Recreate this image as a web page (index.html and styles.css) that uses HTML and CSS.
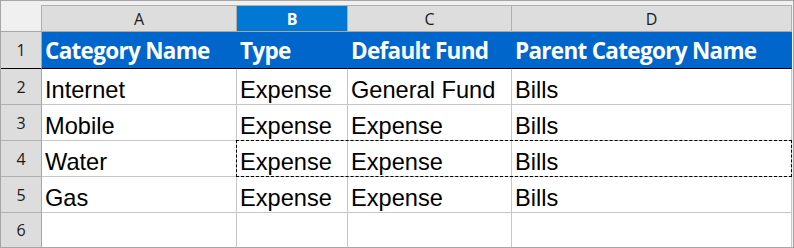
FILE: index.html
```html
<!DOCTYPE html>
<html lang="en">
<head>
    <meta charset="UTF-8">
    <meta name="viewport" content="width=device-width, initial-scale=1.0">
    <title>Categories</title>
    <link rel="stylesheet" href="styles.css">
</head>
<body>
    <div class="sheet">
        <!-- column letters -->
        <div class="corner"></div>
        <div class="colhead first">A</div>
        <div class="colhead active">B</div>
        <div class="colhead">C</div>
        <div class="colhead">D</div>

        <!-- row 1: headings -->
        <div class="rowhead top">1</div>
        <div class="cell heading">Category Name</div>
        <div class="cell heading">Type</div>
        <div class="cell heading">Default Fund</div>
        <div class="cell heading">Parent Category Name</div>

        <div class="rowhead">2</div>
        <div class="cell">Internet</div>
        <div class="cell">Expense</div>
        <div class="cell">General Fund</div>
        <div class="cell">Bills</div>

        <div class="rowhead">3</div>
        <div class="cell">Mobile</div>
        <div class="cell">Expense</div>
        <div class="cell">Expense</div>
        <div class="cell">Bills</div>

        <div class="rowhead">4</div>
        <div class="cell">Water</div>
        <div class="cell">Expense</div>
        <div class="cell">Expense</div>
        <div class="cell">Bills</div>

        <div class="rowhead">5</div>
        <div class="cell">Gas</div>
        <div class="cell">Expense</div>
        <div class="cell">Expense</div>
        <div class="cell">Bills</div>

        <div class="rowhead last">6</div>
        <div class="cell last"></div>
        <div class="cell last"></div>
        <div class="cell last"></div>
        <div class="cell last"></div>

        <!-- copy marquee around B4:D4 -->
        <div class="marquee"></div>
    </div>
</body>
</html>
```

FILE: styles.css
```css
body {
    margin: 0;
    padding: 0;
    background-color: #ffffff;
    font-family: "Liberation Sans", Arial, sans-serif;
}
.sheet {
    position: relative;
    width: 794px;
    height: 248px;
    box-sizing: border-box;
    border: 1px solid #a6a6a6;
    background-color: #f0f0f0;
    display: grid;
    grid-template-columns: 41px 195px 111px 164px 280px;
    grid-template-rows: 31px 37px 36px 36px 36px 36px 34px;
    align-content: start;
}
.corner {
    background-color: #f0f0f0;
    border-bottom: 1px solid #a6a6a6;
}
.colhead {
    margin-top: 4px;
    box-sizing: border-box;
    background-color: #dddddd;
    border-top: 1px solid #b0b0b0;
    border-right: 1px solid #b0b0b0;
    border-bottom: 1px solid #a6a6a6;
    display: flex;
    align-items: center;
    justify-content: center;
    font-family: "Open Sans", "Noto Sans", sans-serif;
    font-size: 16px;
    color: #1a1a1a;
}
.colhead.first {
    margin-left: -1px;
    border-left: 1px solid #b0b0b0;
}
.colhead.active {
    background-color: #0078d4;
    color: #ffffff;
    font-weight: bold;
}
.rowhead {
    box-sizing: border-box;
    background-color: #dddddd;
    border-right: 1px solid #a6a6a6;
    border-bottom: 1px solid #b0b0b0;
    display: flex;
    align-items: center;
    justify-content: center;
    font-family: "Open Sans", "Noto Sans", sans-serif;
    font-size: 16px;
    color: #1a1a1a;
}
.rowhead.top {
    border-bottom-color: #000000;
}
.cell {
    box-sizing: border-box;
    background-color: #ffffff;
    border-right: 1px solid #c6c6c6;
    border-bottom: 1px solid #c6c6c6;
    padding: 0 3px;
    display: flex;
    align-items: flex-end;
    font-size: 23.6px;
    color: #000000;
    white-space: nowrap;
    overflow: hidden;
}
.cell.heading {
    background-color: #0066cc;
    border-right-color: #0066cc;
    border-bottom-color: #000000;
    align-items: center;
    font-family: "Open Sans", "Noto Sans", sans-serif;
    font-weight: bold;
    font-size: 22.5px;
    letter-spacing: -0.7px;
    color: #ffffff;
}
.rowhead.last,
.cell.last {
    border-bottom: none;
}
.marquee {
    position: absolute;
    left: 235px;
    top: 139px;
    width: 556px;
    height: 37px;
    box-sizing: border-box;
    border: 1px dashed #000000;
    pointer-events: none;
}
```
